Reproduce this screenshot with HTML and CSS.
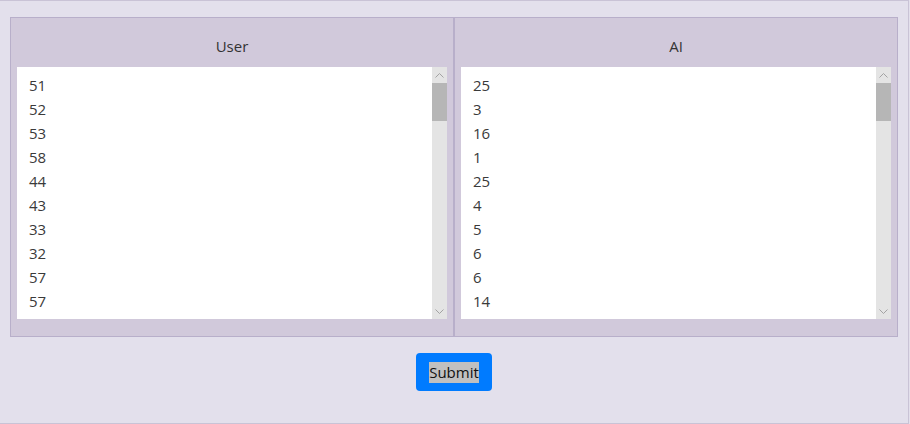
FILE: index.html
```html
<!DOCTYPE html>
<html>
<head>
<meta charset="utf-8">
<link rel="stylesheet" href="styles.css">
</head>
<body>
<div class="app">
  <div class="panel">
    <section class="col">
      <div class="col-head">User</div>
      <div class="list">
        <div class="items">
          <div>51</div><div>52</div><div>53</div><div>58</div><div>44</div><div>43</div><div>33</div><div>32</div><div>57</div><div>57</div>
        </div>
        <div class="scrollbar">
          <div class="sb-btn"><svg width="9" height="5" viewBox="0 0 9 5"><path d="M0.5 4.5 L4.5 0.5 L8.5 4.5" fill="none" stroke="#a3a3a3" stroke-width="1"/></svg></div>
          <div class="sb-thumb"></div>
          <div class="sb-track"></div>
          <div class="sb-btn"><svg width="9" height="5" viewBox="0 0 9 5"><path d="M0.5 0.5 L4.5 4.5 L8.5 0.5" fill="none" stroke="#a3a3a3" stroke-width="1"/></svg></div>
        </div>
      </div>
    </section>
    <section class="col">
      <div class="col-head">AI</div>
      <div class="list">
        <div class="items">
          <div>25</div><div>3</div><div>16</div><div>1</div><div>25</div><div>4</div><div>5</div><div>6</div><div>6</div><div>14</div>
        </div>
        <div class="scrollbar">
          <div class="sb-btn"><svg width="9" height="5" viewBox="0 0 9 5"><path d="M0.5 4.5 L4.5 0.5 L8.5 4.5" fill="none" stroke="#a3a3a3" stroke-width="1"/></svg></div>
          <div class="sb-thumb"></div>
          <div class="sb-track"></div>
          <div class="sb-btn"><svg width="9" height="5" viewBox="0 0 9 5"><path d="M0.5 0.5 L4.5 4.5 L8.5 0.5" fill="none" stroke="#a3a3a3" stroke-width="1"/></svg></div>
        </div>
      </div>
    </section>
  </div>
  <div class="actions">
    <button class="submit" type="button"><span class="sel">Submit</span></button>
  </div>
</div>
</body>
</html>
```

FILE: styles.css
```css
html, body {
  margin: 0;
  padding: 0;
  background: #e3e0ec;
}
.app {
  box-sizing: border-box;
  width: 909px;
  height: 424px;
  border: 1px solid #c9c3d6;
  border-left: none;
  padding: 16px 10px 0 10px;
  background: #e3e0ec;
  font-family: "Open Sans", "Noto Sans", sans-serif;
  color: #333;
}
.panel {
  display: grid;
  grid-template-columns: 444px 444px;
  height: 320px;
}
.col {
  box-sizing: border-box;
  border: 1px solid #b8afca;
  background: #d1c9db;
  padding: 6px;
  display: flex;
  flex-direction: column;
}
.col-head {
  height: 43px;
  display: flex;
  align-items: center;
  justify-content: center;
  font-size: 15px;
  color: #333;
}
.list {
  box-sizing: border-box;
  height: 252px;
  width: 430px;
  background: #fff;
  display: flex;
}
.items {
  flex: 1;
  overflow: hidden;
  padding: 6px 12px;
  font-size: 15px;
  line-height: 24px;
  color: #3a3a3a;
}
.scrollbar {
  width: 15px;
  display: flex;
  flex-direction: column;
  background: #e4e4e4;
}
.sb-btn {
  height: 16px;
  display: flex;
  align-items: center;
  justify-content: center;
}
.sb-thumb {
  height: 38px;
  background: #b6b6b6;
}
.sb-track {
  flex: 1;
}
.actions {
  display: flex;
  justify-content: center;
  margin-top: 16px;
}
.submit {
  width: 76px;
  height: 38px;
  border: none;
  border-radius: 4px;
  background: #007bff;
  padding: 0;
  font-family: "Open Sans", "Noto Sans", sans-serif;
  font-size: 15px;
  color: #111;
  display: flex;
  align-items: center;
  justify-content: center;
}
.sel {
  background: #c0c0c0;
  line-height: 21px;
}
```
